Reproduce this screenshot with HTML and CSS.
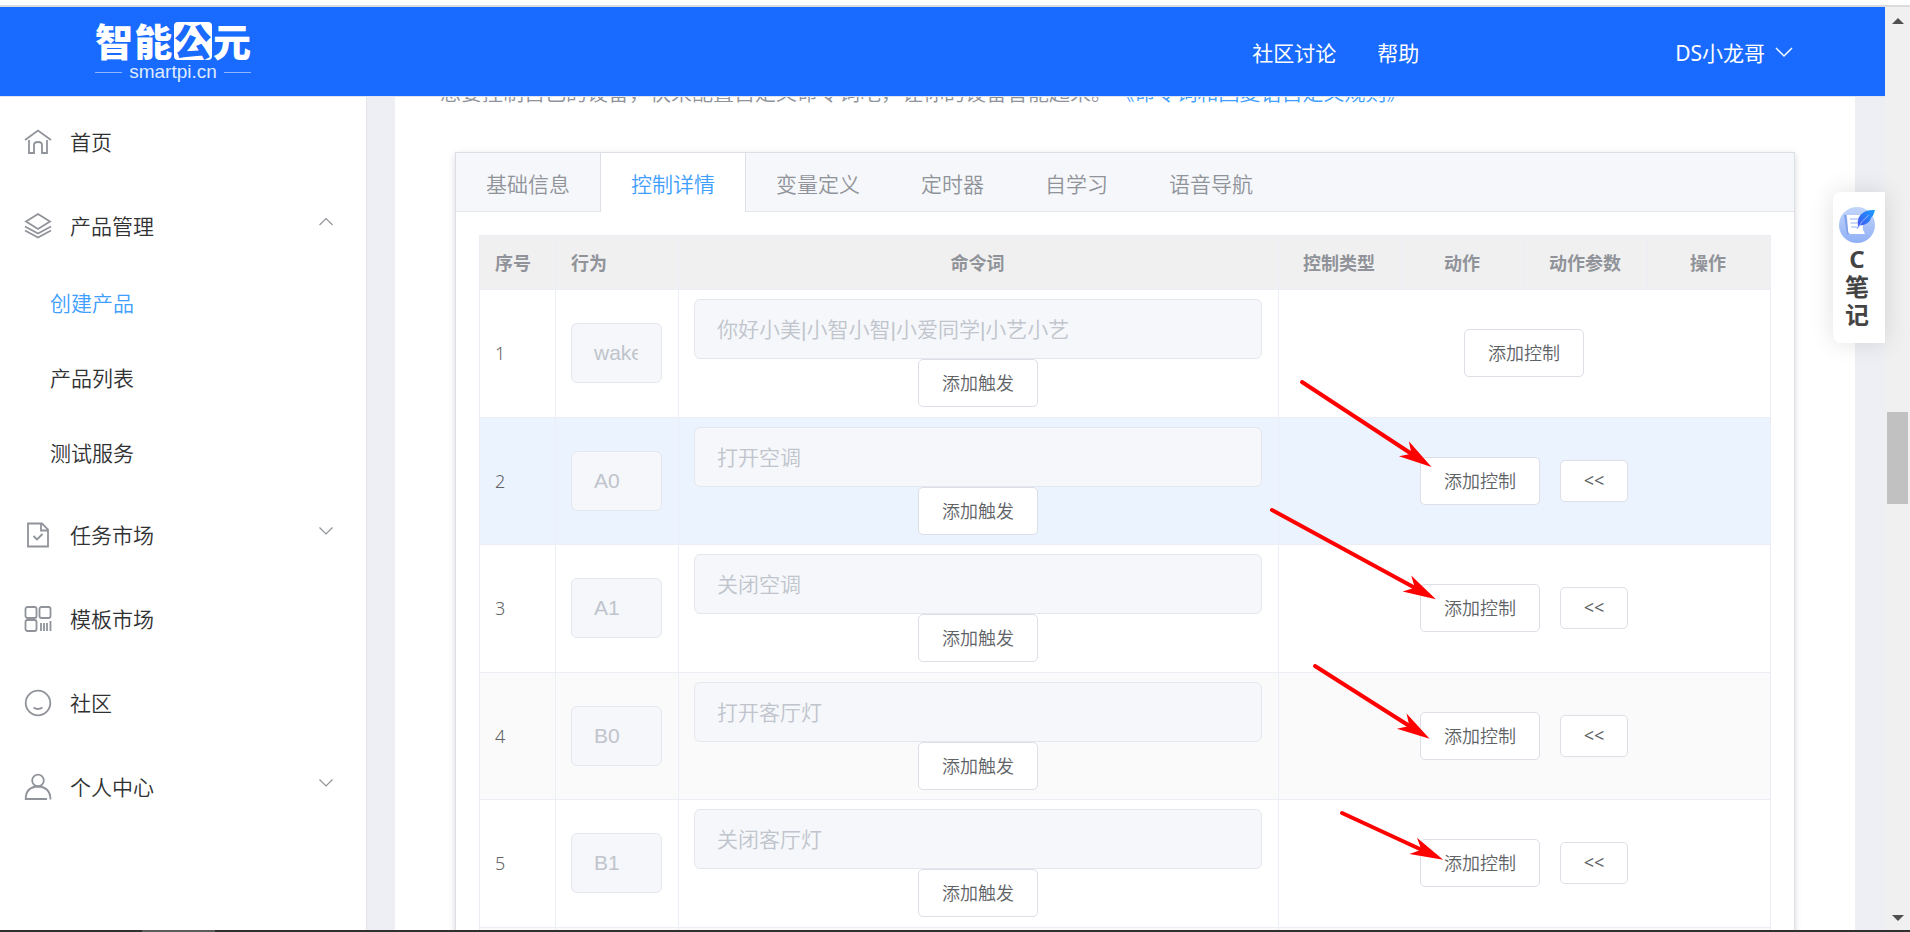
FILE: index.html
```
<!DOCTYPE html>
<html lang="zh-CN">
<head>
<meta charset="utf-8">
<title>智能公元 - 控制详情</title>
<link rel="stylesheet" href="styles.css">
</head>
<body>
<div class="browser-edge"></div>
<div class="browser">
  <div class="app">
    <header class="topbar">
      <div class="logo">
        <div class="logo-name"><span>智</span><span>能</span><span class="logo-box">公</span><span>元</span></div>
        <div class="logo-domain">smartpi.cn</div>
      </div>
      <nav class="topnav">
        <a href="#">社区讨论</a>
        <a href="#">帮助</a>
      </nav>
      <button class="user" type="button">DS小龙哥
        <svg width="18" height="18" viewBox="0 0 18 18"><path d="M1 5l8 8 8-8"/></svg>
      </button>
    </header>
    <div class="body">
      <aside class="sidebar">
        <a class="item" href="#">
          <svg class="icon" viewBox="0 0 28 28"><path d="M1 12L14 2.500L27 12M5 12V25h5V17q0-3 4-3t4 3V25h5V12"/></svg>
          <span>首页</span>
        </a>
        <a class="item" href="#">
          <svg class="icon" viewBox="0 0 28 28"><path d="M14 2L26 9.500L14 17L2 9.500ZM1 14.500L14 21.500L27 14.500M1 18.500L14 25.500L27 18.500"/></svg>
          <span>产品管理</span>
          <svg class="chev" viewBox="0 0 16 16"><path d="M1.500 11L8 4.500L14.500 11"/></svg>
        </a>
        <a class="sub active" href="#">创建产品</a>
        <a class="sub" href="#">产品列表</a>
        <a class="sub" href="#">测试服务</a>
        <a class="item" href="#">
          <svg class="icon" viewBox="0 0 28 28"><path d="M4 2.500H18L24 8.500V25.500H4ZM17 3V9.500H24M9.500 15L13 18.500L18.500 13"/></svg>
          <span>任务市场</span>
          <svg class="chev" viewBox="0 0 16 16"><path d="M1.500 4.500L8 11L14.500 4.500"/></svg>
        </a>
        <a class="item" href="#">
          <svg class="icon" viewBox="0 0 28 28"><rect x="1.500" y="2" width="11" height="11" rx="2"/><rect x="15.500" y="2" width="11" height="11" rx="2"/><rect x="1.500" y="15" width="11" height="11" rx="2"/><path d="M17 18v8M20 18v8M23 18v8M26.500 16v10"/></svg>
          <span>模板市场</span>
        </a>
        <a class="item" href="#">
          <svg class="icon" viewBox="0 0 28 28"><circle cx="14" cy="14" r="12.300"/><path d="M9.500 18.500Q14 21.500 18.500 18.500"/></svg>
          <span>社区</span>
        </a>
        <a class="item" href="#">
          <svg class="icon" viewBox="0 0 28 28"><circle cx="14" cy="7.500" r="5.800"/><path d="M23 26H1.700Q1.700 14 14 13.500Q26.300 14 26.500 26.500"/></svg>
          <span>个人中心</span>
          <svg class="chev" viewBox="0 0 16 16"><path d="M1.500 4.500L8 11L14.500 4.500"/></svg>
        </a>
      </aside>
      <main class="content">
        <p class="intro">想要控制自己的设备，快来配置自定义命令词吧，让你的设备智能起来。<a href="#">《命令词和回复语自定义规则》</a></p>
        <section class="card">
          <div class="tabs" role="tablist">
            <button class="tab" role="tab" type="button">基础信息</button>
            <button class="tab on" role="tab" type="button" aria-selected="true">控制详情</button>
            <button class="tab" role="tab" type="button">变量定义</button>
            <button class="tab" role="tab" type="button">定时器</button>
            <button class="tab" role="tab" type="button">自学习</button>
            <button class="tab" role="tab" type="button">语音导航</button>
          </div>
          <div class="pane">
            <table class="grid">
              <colgroup><col class="c-no"><col class="c-std"><col><col class="c-std"><col class="c-std"><col class="c-std"><col class="c-std"></colgroup>
              <thead>
                <tr><th class="left">序号</th><th class="left">行为</th><th>命令词</th><th>控制类型</th><th>动作</th><th>动作参数</th><th>操作</th></tr>
              </thead>
              <tbody>
                <tr>
                  <td>1</td>
                  <td><input aria-label="行为" value="wakeup_uni" disabled></td>
                  <td class="words"><input aria-label="命令词" value="你好小美|小智小智|小爱同学|小艺小艺" disabled><button type="button">添加触发</button></td>
                  <td colspan="4"><div class="ops"><button type="button">添加控制</button></div></td>
                </tr>
                <tr class="hover">
                  <td>2</td>
                  <td><input aria-label="行为" value="A0" disabled></td>
                  <td class="words"><input aria-label="命令词" value="打开空调" disabled><button type="button">添加触发</button></td>
                  <td colspan="4"><div class="ops"><button type="button">添加控制</button><button type="button" class="small">&lt;&lt;</button></div></td>
                </tr>
                <tr>
                  <td>3</td>
                  <td><input aria-label="行为" value="A1" disabled></td>
                  <td class="words"><input aria-label="命令词" value="关闭空调" disabled><button type="button">添加触发</button></td>
                  <td colspan="4"><div class="ops"><button type="button">添加控制</button><button type="button" class="small">&lt;&lt;</button></div></td>
                </tr>
                <tr>
                  <td>4</td>
                  <td><input aria-label="行为" value="B0" disabled></td>
                  <td class="words"><input aria-label="命令词" value="打开客厅灯" disabled><button type="button">添加触发</button></td>
                  <td colspan="4"><div class="ops"><button type="button">添加控制</button><button type="button" class="small">&lt;&lt;</button></div></td>
                </tr>
                <tr>
                  <td>5</td>
                  <td><input aria-label="行为" value="B1" disabled></td>
                  <td class="words"><input aria-label="命令词" value="关闭客厅灯" disabled><button type="button">添加触发</button></td>
                  <td colspan="4"><div class="ops"><button type="button">添加控制</button><button type="button" class="small">&lt;&lt;</button></div></td>
                </tr>
                <tr><td></td><td></td><td></td><td colspan="4"></td></tr>
              </tbody>
            </table>
          </div>
        </section>
      </main>
    </div>
    <button class="note" type="button">
      <svg width="38" height="38" viewBox="0 0 38 38">
        <defs>
          <linearGradient id="disc" x1="0" y1="0" x2="0" y2="1"><stop offset="0" stop-color="#c3d5fa"/><stop offset="1" stop-color="#90b0f5"/></linearGradient>
          <linearGradient id="quill" x1="1" y1="0" x2="0" y2="1"><stop offset="0" stop-color="#16a0ff"/><stop offset="1" stop-color="#4a4cf0"/></linearGradient>
        </defs>
        <circle cx="19" cy="19" r="18" fill="url(#disc)"/>
        <path d="M7 9L10 28" stroke="#7f9fe8" stroke-width="2" fill="none"/>
        <path d="M9 9H24L25 24L27 28H13Q10 28 10 24Z" fill="#fff"/>
        <path d="M12 13h8M12.500 17h7M13 21h6" stroke="#b9cdf8" stroke-width="1.500"/>
        <path d="M37 4Q25 3 20.500 12Q19 16 20 20L19 23L22 19.500Q31 19 33 12Q36 9 37 4Z" fill="url(#quill)"/>
        <path d="M19 23Q24 14 31 9" stroke="#8fb4ff" fill="none"/>
      </svg>
      <span>C</span><span>笔</span><span>记</span>
    </button>
  </div>
  <div class="scrollbar">
    <svg width="12" height="6" viewBox="0 0 12 6"><path d="M0 6L6 0L12 6Z"/></svg>
    <div class="track"><div class="thumb"></div></div>
    <svg width="12" height="6" viewBox="0 0 12 6"><path d="M0 0L6 6L12 0Z"/></svg>
  </div>
  <svg class="arrows" aria-hidden="true">
    <defs>
      <marker id="head" markerUnits="userSpaceOnUse" markerWidth="40" markerHeight="24" viewBox="0 0 40 24" refX="25" refY="12" orient="auto" overflow="visible">
        <path d="M34 12L1 3L10 12L1 21Z" fill="#f00"/>
      </marker>
    </defs>
    <path d="M1302 375L1424 455"/>
    <path d="M1272 503L1428 588"/>
    <path d="M1315 659L1422 727"/>
    <path d="M1342 806L1435 849"/>
  </svg>
</div>
<div class="taskbar"><div class="task"></div></div>
</body>
</html>
```
FILE: styles.css
```
* { box-sizing: border-box; }
body {
  margin: 0;
  height: 100vh;
  overflow: hidden;
  display: flex;
  flex-direction: column;
  background: #fff;
  color: #303133;
  font-family: "Noto Sans", "Noto Sans CJK SC", sans-serif;
  font-size: 21px;
  font-weight: 350;
}
a { color: inherit; text-decoration: none; }
button, input { font: inherit; margin: 0; }
svg { flex: none; }

.browser-edge { height: 7px; flex: none; border-bottom: 2px solid #d9dbdd; }
.browser { position: relative; flex: 1; min-height: 0; display: flex; }
.app { position: relative; flex: 1; min-width: 0; display: flex; flex-direction: column; }

.topbar {
  height: 90px;
  flex: none;
  display: flex;
  align-items: center;
  padding: 0 92px 0 95px;
  background: #196bff;
  border-bottom: 1px solid #dfe4ee;
  color: #fff;
  font-weight: 400;
}
.logo { margin-right: auto; padding-top: 3px; width: 156px; }
.logo-name { display: flex; justify-content: space-between; font-size: 38px; line-height: 38px; font-weight: 900; }
.logo-box { background: #fff; color: #196bff; border-radius: 4px; }
.logo-domain {
  display: flex;
  align-items: center;
  justify-content: space-between;
  font: 19px/24px "Liberation Sans", Arial, sans-serif;
  color: #dfeaff;
}
.logo-domain::before, .logo-domain::after { content: ""; width: 27px; height: 1px; background: #8fb6ff; }
.topnav { display: flex; gap: 41px; margin-right: 256px; }
.user {
  display: flex;
  align-items: center;
  gap: 10px;
  padding: 0;
  border: 0;
  background: none;
  color: #fff;
}
.user svg { fill: none; stroke: #fff; stroke-width: 1.5; }

.body { flex: 1; min-height: 0; display: flex; background: #eeeff4; overflow: hidden; }
.sidebar {
  width: 367px;
  flex: none;
  padding-top: 3px;
  background: #fff;
  border-right: 1px solid #e4e4e6;
}
.item { display: flex; align-items: center; height: 84px; padding: 0 32px 0 24px; gap: 18px; }
.item span { padding-bottom: 3px; }
.icon { width: 28px; height: 28px; fill: none; stroke: #909399; stroke-width: 1.8; }
.chev { width: 16px; height: 16px; margin: 0 0 8px auto; fill: none; stroke: #909399; stroke-width: 1.2; }
.sub { display: flex; align-items: center; height: 75px; padding: 0 0 7px 50px; }
.active { color: #409eff; }

.content { flex: 1; min-width: 0; margin: 0 30px 0 28px; background: #fff; }
.intro { margin: -21px 45px 44px; line-height: 32px; color: #909399; white-space: nowrap; }
.intro a { margin-left: 12px; color: #409eff; }
.card {
  margin: 0 60px;
  border: 1px solid #dcdfe6;
  box-shadow: 0 3px 6px rgba(0, 0, 0, .12), 0 0 9px rgba(0, 0, 0, .04);
}
.tabs { display: flex; height: 59px; background: #f5f7fa; border-bottom: 1px solid #e4e7ed; }
.tab {
  height: 59px;
  padding: 0 30px;
  border: solid transparent;
  border-width: 0 1px;
  margin-left: -1px;
  background: none;
  color: #909399;
}
.tab.on { background: #fff; border-color: #dcdfe6; color: #409eff; }
.pane { padding: 23px; }

.grid {
  width: 100%;
  table-layout: fixed;
  border-collapse: separate;
  border-spacing: 0;
  border: solid #ebeef5;
  border-width: 1px 0 0 1px;
  font-size: 18px;
  color: #606266;
}
.c-no { width: 76px; }
.c-std { width: 123px; }
.grid th, .grid td { border: solid #ebeef5; border-width: 0 1px 1px 0; }
.grid th { height: 54px; padding: 0 2px 2px 0; background: #f0f0f0; color: #909399; font-weight: 700; }
.grid th.left { text-align: left; padding-left: 15px; }
.grid td { padding: 9px 16px 10px 15px; }
.grid tbody tr:nth-child(even) td { padding-bottom: 9px; background: #fafafa; }
.grid tbody tr.hover td { background: #ebf3ff; }
.grid input {
  display: block;
  width: 100%;
  height: 60px;
  padding: 0 23px 0 22px;
  border: 1px solid #e4e7ed;
  border-radius: 6px;
  background: #f5f7fa;
  color: #c0c4cc;
  font-family: "Liberation Sans", "Noto Sans CJK SC", sans-serif;
  font-size: 21px;
}
.grid .words input { padding-bottom: 3px; }
.grid button {
  display: block;
  width: 120px;
  height: 48px;
  padding: 0 0 2px;
  border: 1px solid #dcdfe6;
  border-radius: 5px;
  background: #fff;
  color: #606266;
}
.grid button.small { width: 68px; height: 42px; font-weight: 400; }
.words button { margin: 0 auto; }
.ops { display: flex; justify-content: center; align-items: center; gap: 20px; }

.note {
  position: absolute;
  top: 185px;
  right: 0;
  width: 52px;
  height: 151px;
  display: flex;
  flex-direction: column;
  align-items: center;
  padding: 14px 4px 0 0;
  border: 0;
  border-radius: 8px 0 0 8px;
  background: #fff;
  box-shadow: 0 0 24px rgba(0, 0, 0, .12);
  color: #444;
  font-size: 24px;
  font-weight: 700;
  line-height: 28px;
}
.note svg { margin-bottom: 1px; }

.scrollbar {
  width: 25px;
  flex: none;
  display: flex;
  flex-direction: column;
  align-items: center;
  padding: 11px 0 9px;
  background: #f0f0f0;
  fill: #505050;
}
.track { flex: 1; width: 21px; padding-top: 388px; }
.thumb { height: 92px; background: #c1c1c1; }

.arrows { position: absolute; top: 0; left: 0; width: 100%; height: 100%; pointer-events: none; }
.arrows > path { stroke: #f00; stroke-width: 4; stroke-linecap: round; fill: none; marker-end: url(#head); }

.taskbar { height: 2px; flex: none; padding-left: 142px; background: #303030; }
.task { width: 73px; height: 2px; background: #5c5c5c; }
```
